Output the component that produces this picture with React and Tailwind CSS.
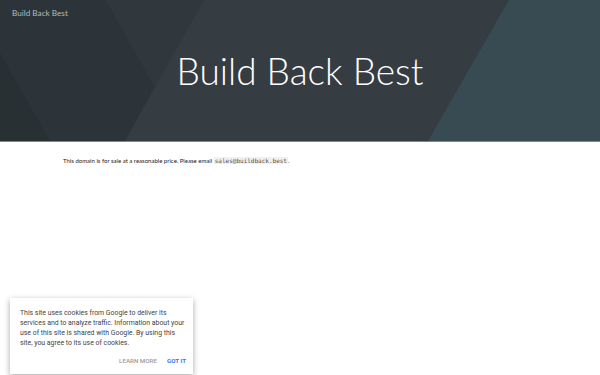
export default function App() {
    return (
        <div className="w-[600px] h-[375px] bg-white overflow-hidden relative font-['Lato',sans-serif]">
            {/* header with faceted background */}
            <header className="relative h-[142px] bg-[#353d42] border-b border-[#7d878c] overflow-hidden">
                <svg className="absolute inset-0" width="600" height="141" viewBox="0 0 600 141" preserveAspectRatio="none">
                    <polygon points="0,0 106,0 155,87 125,141 0,141" fill="#2d3439" />
                    <polygon points="0,53 50,141 0,141" fill="#293034" />
                    <polygon points="106,0 204,0 155,87" fill="#30383d" />
                    <polygon points="509,0 600,0 600,141 428,141" fill="#384a52" />
                </svg>
                <div className="relative pl-3 pt-[7px] text-[8.2px] text-[#b4b9bc]">Build Back Best</div>
                <h1 className="relative text-center mt-[33px] text-[37px] leading-none font-light text-white">
                    Build Back Best
                </h1>
            </header>

            <main className="pl-[63px] pt-[14px]">
                <p className="text-[6px] text-[#222] leading-[10px]">
                    This domain is for sale at a reasonable price. Please email{" "}
                    <code className="font-['DejaVu_Sans_Mono',monospace] text-[6px] bg-[#f0f0f0] px-[1px] text-[#555]">sales@buildback.best</code>.
                </p>
            </main>

            {/* cookie notice */}
            <div className="absolute left-[10px] top-[298px] w-[183px] bg-white shadow-[0_2px_6px_rgba(0,0,0,0.35)] pl-[10px] pr-[7px] pt-[10px] pb-[8px] font-['Roboto',sans-serif]">
                <p className="text-[6.9px] leading-[10px] text-[#444]">
                    This site uses cookies from Google to deliver its services and to analyze traffic. Information about your use of this site is shared with Google. By using this site, you agree to its use of cookies.
                </p>
                <div className="flex justify-end gap-[10px] mt-[9px] text-[6.2px] font-medium">
                    <span className="text-[#9a9a9a]">LEARN MORE</span>
                    <span className="text-[#3b78e7] font-bold">GOT IT</span>
                </div>
            </div>
        </div>
    );
}
